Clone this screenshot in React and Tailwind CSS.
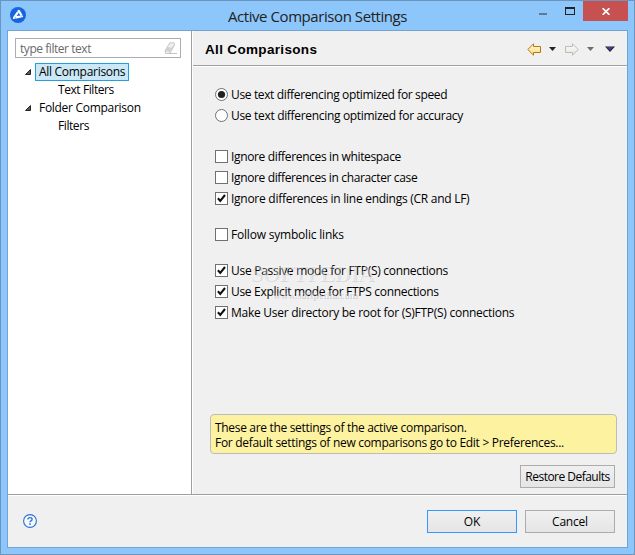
import React, { useState } from 'react';

const TREE = [
  { id: 'all', label: 'All Comparisons', children: ['Text Filters'] },
  { id: 'folder', label: 'Folder Comparison', children: ['Filters'] }
];

const MODES = [
  { id: 'speed', label: 'Use text differencing optimized for speed', spacing: 'tracking-[-0.36px]' },
  { id: 'accuracy', label: 'Use text differencing optimized for accuracy', spacing: 'tracking-[-0.32px]' }
];

const OPTION_GROUPS = [
  [
    { id: 'whitespace', label: 'Ignore differences in whitespace', spacing: 'tracking-[-0.35px]' },
    { id: 'case', label: 'Ignore differences in character case', spacing: 'tracking-[-0.36px]' },
    { id: 'endings', label: 'Ignore differences in line endings (CR and LF)', spacing: 'tracking-[-0.27px]' }
  ],
  [{ id: 'symlinks', label: 'Follow symbolic links', spacing: 'tracking-[-0.2px]' }],
  [
    { id: 'passive', label: 'Use Passive mode for FTP(S) connections', spacing: 'tracking-[-0.28px]' },
    { id: 'explicit', label: 'Use Explicit mode for FTPS connections', spacing: 'tracking-[-0.3px]' },
    { id: 'root', label: 'Make User directory be root for (S)FTP(S) connections', spacing: 'tracking-[-0.27px]' }
  ]
];

function AppIcon() {
  return (
    <svg width="16" height="16" viewBox="0 0 16 16">
      <circle cx="8" cy="8" r="8" fill="#1565dc" />
      <path d="M8.8 3.8 L12 9.2 L4 10.9 Z" fill="#1565dc" stroke="#fff" strokeWidth="2.2" strokeLinejoin="round" />
      <path d="M6.6 3.8 L8.2 5.4 M13 8 L10.8 9.4 M5 12.2 L5.4 9.8" stroke="#1565dc" strokeWidth="0.5" />
    </svg>
  );
}

function ExpandArrow() {
  return (
    <svg width="6" height="6" viewBox="0 0 6 6" className="shrink-0">
      <path d="M5.5 0.5 V5.5 H0.5 Z" fill="#595959" stroke="#262626" />
    </svg>
  );
}

function EraserIcon() {
  return (
    <svg width="14" height="13" viewBox="0 0 14 13">
      <path d="M5.8 0.8 L10 0.8 L10.6 2.8 L6 11.5 L1.6 11.5 L1 8.8 Z" fill="#efefed" stroke="#bcbcba" strokeWidth="0.8" />
      <path d="M1.2 8.6 L3.2 5 L7.4 5.4 L5.6 9.2 Z" fill="#d2d2d0" />
      <path d="M5.6 9.2 L10.4 2.9 M1 8.8 L5.6 9.2 L6 11.5" fill="none" stroke="#c8c8c6" strokeWidth="0.8" />
      <path d="M6 11.5 H13" stroke="#c2c2c0" />
    </svg>
  );
}

function NavArrow({ flip, stroke, from, to, id }) {
  return (
    <svg width="14" height="13" viewBox="0 0 14 13" className={flip ? '-scale-x-100' : ''}>
      <defs>
        <linearGradient id={id} x1="0" y1="0" x2="0" y2="1">
          <stop offset="0" stopColor={from} />
          <stop offset="1" stopColor={to} />
        </linearGradient>
      </defs>
      <path
        d="M0.8 6.5 L6.5 0.8 V3.5 H13.5 V9.5 H6.5 V12.2 Z"
        fill={`url(#${id})`}
        stroke={stroke}
        strokeLinejoin="round"
      />
    </svg>
  );
}

function MenuTriangle({ color }) {
  return (
    <svg width="7" height="4" viewBox="0 0 7 4">
      <path d="M0 0 H7 L3.5 4 Z" fill={color} />
    </svg>
  );
}

function Radio({ checked }) {
  return (
    <svg width="13" height="13" viewBox="0 0 13 13" className="shrink-0">
      <circle cx="6.5" cy="6.5" r="6" fill="#fff" stroke="#707070" />
      {checked && <circle cx="6.5" cy="6.5" r="3.6" fill="#212121" />}
    </svg>
  );
}

function CheckBox({ checked }) {
  return (
    <svg width="13" height="13" viewBox="0 0 13 13" className="shrink-0">
      <rect x="0.5" y="0.5" width="12" height="12" fill="#fff" stroke="#707070" />
      {checked && <path d="M2.9 6.2 L5.3 8.9 L10 3" fill="none" stroke="#111" strokeWidth="2.1" />}
    </svg>
  );
}

function OptionRow({ control, label, spacing, onClick }) {
  return (
    <div onClick={onClick} className="flex h-[21px] items-center gap-[3px]">
      {control}
      <span className={`whitespace-nowrap ${spacing}`}>{label}</span>
    </div>
  );
}

function TitleBar() {
  return (
    <div className="relative flex h-[29px] items-start pl-[9px]">
      <div className="mt-[6px]">
        <AppIcon />
      </div>
      <div className="absolute inset-x-0 top-[4px] text-center text-[15px] leading-[22px] tracking-[-0.43px] text-[#222]">
        Active Comparison Settings
      </div>
      <div className="ml-auto flex items-start">
        <span className="mt-[12px] mr-[18px] h-[2px] w-[8px] bg-[#5b7b99]" />
        <span className="mt-[6px] mr-[8px] h-[8px] w-[10px] border border-t-2 border-[#222]" />
        <button className="flex h-5 w-[45px] items-center justify-center bg-[#c75050]">
          <svg width="8" height="7" viewBox="0 0 8 7">
            <path d="M0.6 0.2 L7.4 6.8 M7.4 0.2 L0.6 6.8" stroke="#fff" strokeWidth="1.7" />
          </svg>
        </button>
        <span className="w-[6px]" />
      </div>
    </div>
  );
}

function Sidebar({ selected, onSelect }) {
  return (
    <div className="w-[183px] shrink-0 bg-white pt-[7px] pr-[10px] pl-[7px]">
      <div className="flex h-5 items-center justify-between border border-[#abadb3] pr-[2px] pl-1 text-[#6a6a6a]">
        <span className="tracking-[-0.45px]">type filter text</span>
        <EraserIcon />
      </div>
      <div className="mt-[5px]">
        {TREE.map((node) => (
          <div key={node.id}>
            <div className="flex h-[18px] items-center gap-1 pl-[10px]" onClick={() => onSelect(node.id)}>
              <ExpandArrow />
              <span
                className={`h-[18px] border px-[3px] leading-4 tracking-[-0.29px] whitespace-nowrap ${
                  selected === node.id ? 'border-[#26a0da] bg-[#cbe8f6]' : 'border-transparent'
                }`}
              >
                {node.label}
              </span>
            </div>
            {node.children.map((child) => (
              <div key={child} className="h-[18px] pl-[43px] leading-[18px] tracking-[-0.42px]">
                {child}
              </div>
            ))}
          </div>
        ))}
      </div>
    </div>
  );
}

function PanelHeader() {
  return (
    <div className="flex h-[35px] items-center border-b border-[#a0a0a0] pr-[12px] pl-[12px]">
      <h1 className="mt-[3px] font-['Liberation_Sans',sans-serif] text-[13.5px] font-bold tracking-[0.33px]">All Comparisons</h1>
      <div className="mt-[2px] ml-auto flex items-center">
        <NavArrow id="back" stroke="#b17a12" from="#fffbe0" to="#fbd977" />
        <span className="ml-2">
          <MenuTriangle color="#222" />
        </span>
        <span className="ml-[9px]">
          <NavArrow id="forward" flip stroke="#bcbab5" from="#ffffff" to="#e2e1dc" />
        </span>
        <span className="ml-2">
          <MenuTriangle color="#6d6d6d" />
        </span>
        <svg width="10" height="6" viewBox="0 0 10 6" className="ml-[11px]">
          <path d="M0 0.5 H10 L5 6 Z" fill="#222" />
          <path d="M1 1 H8 L5 4.5 Z" fill="#433a9c" />
        </svg>
      </div>
    </div>
  );
}

function App() {
  const [selected, setSelected] = useState('all');
  const [mode, setMode] = useState('speed');
  const [options, setOptions] = useState({ endings: true, passive: true, explicit: true, root: true });

  const toggle = (id) => setOptions((prev) => ({ ...prev, [id]: !prev[id] }));

  return (
    <div className="flex h-[555px] w-[635px] flex-col border border-[#6b95bd] bg-[#8dc6fa] font-['Open_Sans',sans-serif] text-[12px] leading-[15px] text-black">
      <TitleBar />
      <div className="mx-[6px] flex h-[518px] flex-col border border-[#72a3d3] bg-[#f0f0f0]">
        <div className="flex h-[463px]">
          <Sidebar selected={selected} onSelect={setSelected} />
          <div className="w-px bg-[#a0a0a0]" />
          <div className="w-px bg-white" />
          <div className="flex min-w-0 flex-1 flex-col">
            <PanelHeader />
            <div className="flex flex-1 flex-col border-t border-white pt-[17px] pr-[10px] pb-[6px] pl-[17px]">
              <div className="pl-[5px]">
                {MODES.map((m) => (
                  <OptionRow key={m.id} {...m} control={<Radio checked={mode === m.id} />} onClick={() => setMode(m.id)} />
                ))}
              </div>
              <div className="relative mt-5 flex flex-col gap-[15px] pl-[5px]">
                {OPTION_GROUPS.map((group, idx) => (
                  <div key={idx}>
                    {group.map((o) => (
                      <OptionRow key={o.id} {...o} control={<CheckBox checked={!!options[o.id]} />} onClick={() => toggle(o.id)} />
                    ))}
                  </div>
                ))}
                {/* stamp laid over the option list */}
                <div className="pointer-events-none absolute top-[111px] left-[40px] font-['Liberation_Serif',serif] text-[23px] leading-[26px] font-bold tracking-[-0.9px] whitespace-nowrap text-white/35 [text-shadow:1px_1px_0_rgba(0,0,0,0.09)]">
                  SOFTPEDIA<span className="align-super text-[6px]">™</span>
                </div>
                <div className="pointer-events-none absolute top-[142px] left-[62px] font-['Liberation_Serif',serif] text-[10.5px] leading-[13px] font-bold tracking-[-0.1px] whitespace-nowrap text-white/40 [text-shadow:1px_1px_0_rgba(0,0,0,0.15)]">
                  www.softpedia.com
                </div>
              </div>
              <div className="mt-auto h-10 rounded border border-[#bcbcbc] bg-[#fdf2a0] pt-[5px] pl-1 whitespace-nowrap">
                <p className="tracking-[-0.32px]">These are the settings of the active comparison.</p>
                <p className="tracking-[-0.3px]">For default settings of new comparisons go to Edit &gt; Preferences...</p>
              </div>
              <button className="mt-[11px] mr-[2px] h-[23px] w-[95px] self-end border border-[#acacac] bg-linear-to-b from-[#f0f0f0] to-[#e5e5e5] tracking-[-0.52px] whitespace-nowrap">
                Restore Defaults
              </button>
            </div>
          </div>
        </div>
        <div className="flex flex-1 items-start border-t border-[#a0a0a0]">
          <div className="flex h-full w-full items-start border-t border-white pt-[14px] pr-[12px] pl-[15px]">
            <svg width="14" height="14" viewBox="0 0 14 14" className="mt-[4px]">
              <circle cx="7" cy="7" r="6.4" fill="#f7faff" stroke="#2a6fd6" strokeWidth="1.1" />
              <path d="M4.9 5.6 Q4.9 3.7 7 3.7 Q9.1 3.7 9.1 5.4 Q9.1 6.4 8 6.9 Q7 7.4 7 8.3" fill="none" stroke="#2a6fd6" strokeWidth="1.3" />
              <rect x="6.2" y="9.3" width="1.6" height="1.5" fill="#2a6fd6" />
            </svg>
            <button className="ml-auto h-[23px] w-[90px] border border-[#3399ff] bg-linear-to-b from-[#f0f0f0] to-[#e5e5e5]">OK</button>
            <button className="ml-2 h-[23px] w-[90px] border border-[#acacac] bg-linear-to-b from-[#f0f0f0] to-[#e5e5e5] tracking-[-0.2px]">Cancel</button>
          </div>
        </div>
      </div>
    </div>
  );
}

export default App;
